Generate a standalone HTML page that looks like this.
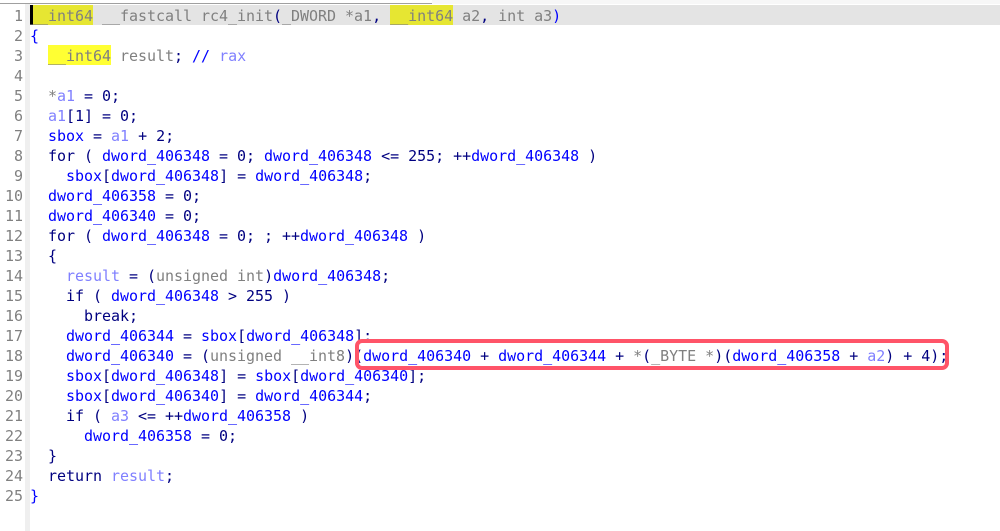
<!DOCTYPE html>
<html><head><meta charset="utf-8"><style>
html,body{margin:0;padding:0;background:#fff}
#r{position:relative;width:1000px;height:531px;overflow:hidden;background:#fff}
#top{position:absolute;left:0;top:3px;width:432px;height:1px;background:#a0a0a0}
#top2{position:absolute;left:432px;top:0;width:568px;height:4px;background:#f7f7f7}
#gut{position:absolute;left:25px;top:4px;width:5px;height:527px;background:#efefef}
#l1{position:absolute;left:30px;top:5px;width:970px;height:20px;background:#e4e4e4}
.y{position:absolute;height:20px}
#c{position:absolute;left:30px;top:5px;width:3px;height:20px;background:#000}
pre{position:absolute;margin:0;font:15px/20px "DejaVu Sans Mono",monospace;letter-spacing:-0.03px;color:#000080;top:6px}
#n{left:0;width:23px;text-align:right;color:#808080}
#t{left:30px}
.b{color:#0000ff}.g{color:#808080}.l{color:#8080ff}
#box{position:absolute;left:355px;top:339px;width:586px;height:23px;border:4px solid #ff5468;border-radius:7px}
</style></head><body><div id="r">
<div id="top"></div><div id="top2"></div><div id="gut"></div><div id="l1"></div>
<div class="y" style="left:30px;top:5px;width:63px;background:#e6e632"></div>
<div class="y" style="left:390px;top:5px;width:63px;background:#e6e632"></div>
<div class="y" style="left:48px;top:45px;width:63px;background:#ffff33"></div>
<div id="c"></div>
<pre id="n">1
2
3
4
5
6
7
8
9
10
11
12
13
14
15
16
17
18
19
20
21
22
23
24
25</pre>
<pre id="t"><span class="g">__int64 __fastcall rc4_init</span>(<span class="g">_DWORD *a1</span>, <span class="g">__int64 a2</span>, <span class="g">int a3</span><span class="b">)</span>
<span class="b">{</span>
  <span class="g">__int64 result</span>; <span class="b">//</span> <span class="l">rax</span>

  <span class="g">*</span><span class="l">a1</span> = 0;
  <span class="l">a1</span>[1] = 0;
  <span class="b">sbox</span> = <span class="l">a1</span> + 2;
  for ( <span class="b">dword_406348</span> = 0; <span class="b">dword_406348</span> &lt;= 255; ++<span class="b">dword_406348</span> )
    <span class="b">sbox</span>[<span class="b">dword_406348</span>] = <span class="b">dword_406348</span>;
  <span class="b">dword_406358</span> = 0;
  <span class="b">dword_406340</span> = 0;
  for ( <span class="b">dword_406348</span> = 0; ; ++<span class="b">dword_406348</span> )
  {
    <span class="l">result</span> = (<span class="g">unsigned int</span>)<span class="b">dword_406348</span>;
    if ( <span class="b">dword_406348</span> &gt; 255 )
      break;
    <span class="b">dword_406344</span> = <span class="b">sbox</span>[<span class="b">dword_406348</span>];
    <span class="b">dword_406340</span> = (<span class="g">unsigned __int8</span>)(<span class="b">dword_406340</span> + <span class="b">dword_406344</span> + <span class="g">*</span>(<span class="g">_BYTE *</span>)(<span class="b">dword_406358</span> + <span class="l">a2</span>) + 4);
    <span class="b">sbox</span>[<span class="b">dword_406348</span>] = <span class="b">sbox</span>[<span class="b">dword_406340</span>];
    <span class="b">sbox</span>[<span class="b">dword_406340</span>] = <span class="b">dword_406344</span>;
    if ( <span class="l">a3</span> &lt;= ++<span class="b">dword_406358</span> )
      <span class="b">dword_406358</span> = 0;
  }
  return <span class="l">result</span>;
<span class="b">}</span></pre>
<div id="box"></div>
</div></body></html>
